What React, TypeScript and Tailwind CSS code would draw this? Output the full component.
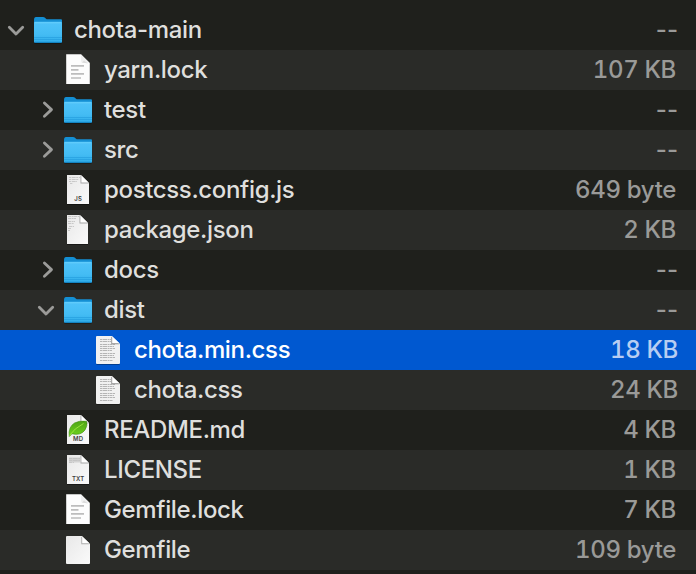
import type { ReactNode } from "react";

type IconKind = "folder" | "lines" | "js" | "json" | "css" | "md" | "txt" | "blank";

type Entry = {
  name: string;
  size: string;
  level: 0 | 1 | 2;
  icon: IconKind;
  open?: boolean;
  selected?: boolean;
};

const entries: Entry[] = [
  { name: "chota-main", size: "--", level: 0, icon: "folder", open: true },
  { name: "yarn.lock", size: "107 KB", level: 1, icon: "lines" },
  { name: "test", size: "--", level: 1, icon: "folder", open: false },
  { name: "src", size: "--", level: 1, icon: "folder", open: false },
  { name: "postcss.config.js", size: "649 byte", level: 1, icon: "js" },
  { name: "package.json", size: "2 KB", level: 1, icon: "json" },
  { name: "docs", size: "--", level: 1, icon: "folder", open: false },
  { name: "dist", size: "--", level: 1, icon: "folder", open: true },
  { name: "chota.min.css", size: "18 KB", level: 2, icon: "css", selected: true },
  { name: "chota.css", size: "24 KB", level: 2, icon: "css" },
  { name: "README.md", size: "4 KB", level: 1, icon: "md" },
  { name: "LICENSE", size: "1 KB", level: 1, icon: "txt" },
  { name: "Gemfile.lock", size: "7 KB", level: 1, icon: "lines" },
  { name: "Gemfile", size: "109 byte", level: 1, icon: "blank" },
];

const indent = { 0: "pl-0", 1: "pl-[30px]", 2: "pl-[60px]" };

function Chevron({ open }: { open?: boolean }) {
  return (
    <svg width="32" height="40" viewBox="0 0 32 40" fill="none" className="shrink-0">
      {open !== undefined && (
        <path
          d={open ? "M9.3 17.3 16 24.1 22.7 17.3" : "M14.4 13 21.5 19.6 14.4 26.2"}
          stroke="#9b9b99"
          strokeWidth="2.8"
          strokeLinecap="round"
          strokeLinejoin="round"
        />
      )}
    </svg>
  );
}

function Folder() {
  return (
    <>
      <path d="M2 10q0-3 2-3h7q1.2 0 2 .8l1 .9q.6.6 1.6.6H29q1 0 1 1V32H2z" fill="#148fd3" />
      <path d="M2.5 33.3h27" stroke="#000" strokeOpacity=".35" />
      <path d="M2 12.6q0-.8.8-.8h26.4q.8 0 .8.8V31.5q0 1.3-1.3 1.3H3.3Q2 32.8 2 31.5z" fill="url(#folder)" />
      <path d="M3 12.8h26" stroke="#6fd3fd" strokeWidth=".8" />
      <path d="M2 27.5h28M2 29.5h28" stroke="#219bdc" strokeWidth=".6" />
      <path d="M2.5 32.3h27" stroke="#0f84c6" />
    </>
  );
}

// The sheet most file types share, with its corner folded over
function Sheet({ right = 27 }: { right?: number }) {
  return (
    <>
      <path d={`M5 34.5H${right}`} stroke="#000" strokeOpacity=".4" />
      <path d={`M5 5H${right - 8}L${right} 13V34H5z`} fill="url(#paper)" />
      <path d={`M${right - 8.5} 5V13.5H${right}z`} fill="#a5a5a5" />
      <path d={`M${right - 7.6} 5.4V12.5H${right - 0.5}z`} fill="#fff" />
    </>
  );
}

function Tag({ children }: { children: string }) {
  return (
    <text
      x="16.2"
      y="31.2"
      textAnchor="middle"
      fontSize="6"
      fontWeight="600"
      letterSpacing=".15"
      fill="#3d3d3d"
      fontFamily="Inter, sans-serif"
    >
      {children}
    </text>
  );
}

const icons: Record<IconKind, ReactNode> = {
  folder: <Folder />,
  lines: (
    <>
      <path d="M4.2 4.2H19L27.8 13V34H4.2z" fill="#fdfdfd" />
      <path d="M19 4.5v6q0 2.5 2.5 2.5h6z" fill="#f0f0f0" />
      <path d="M20 12.5 22 10.5 26 13.4z" fill="#dcdcdc" />
      <path d="M9 15.8h13M9 19.8h7.5M9 23.9h13M9 28h10" stroke="#bdbdbd" strokeWidth="1.7" />
    </>
  ),
  js: (
    <>
      <Sheet />
      <path d="M7 7.5h11M7 9.5h10M7 11.5h8M8 13.5h3" stroke="#c9c9c9" strokeDasharray="2 .7 4 .5" />
      <Tag>JS</Tag>
    </>
  ),
  json: (
    <>
      <Sheet right={26} />
      <path
        d="M6 6.5h11M6 8.5h8M6 11.5h7M6 13.5h6M7 16.5h5M6 18.5h3M6 20.5h2"
        stroke="#c8c8c8"
        strokeDasharray="3 .6 2 .4"
      />
    </>
  ),
  css: (
    <>
      <path d="M4.5 34.4h23" stroke="#000" strokeOpacity=".35" />
      <path d="M5 6H20L28 14V33q0 1-1 1H5q-1 0-1-1V7q0-1 1-1z" fill="#f1f1f1" />
      <path
        d="M8 9.5h11M8 11.5h11M8 14.5h15M8 16.5h14M8 18.5h15M8 20.5h12M8 23.5h15M8 25.5h14M8 27.5h15M8 30.5h13"
        stroke="#b5b5b5"
        strokeDasharray="2.5 .5 4 .6 1.5 .4"
      />
      <path d="M19.3 6.5V14.2H27.5z" fill="#8d8d8d" />
      <path d="M20.2 6.5V13.3H27.5z" fill="#fff" />
    </>
  ),
  md: (
    <>
      <Sheet />
      <path
        d="M7.3 26.5Q6 17 12.5 13Q17 10.5 24.5 11.2Q26 15 23 20Q18.5 26 10 23.7Z"
        fill="url(#leaf)"
        stroke="#3b8c0b"
        strokeWidth=".6"
      />
      <path d="M7.5 25.5Q12 18.5 21.5 13.5" stroke="#a8ec48" strokeWidth=".8" fill="none" />
      <Tag>MD</Tag>
    </>
  ),
  txt: (
    <>
      <Sheet />
      <path d="M7 7.5h11v5H7z" fill="#d3d3d3" />
      <path d="M7 8.5h11M7 10.5h11M7 12.5h5" stroke="#bdbdbd" strokeDasharray="3 .7 5 .5" strokeWidth=".7" />
      <Tag>TXT</Tag>
    </>
  ),
  blank: (
    <>
      <path d="M5 6H20L28 14V33q0 1-1 1H5q-1 0-1-1V7q0-1 1-1z" fill="url(#paper)" />
      <path d="M19.3 6.5V14.2H27.5z" fill="#aaa" />
      <path d="M20.2 6.5V13.3H27.5z" fill="#fff" />
    </>
  ),
};

function Defs() {
  return (
    <svg width="0" height="0" className="absolute">
      <defs>
        <linearGradient id="folder" x1="0" y1="0" x2="0" y2="1">
          <stop offset="0" stopColor="#4fc3fa" />
          <stop offset=".6" stopColor="#44bcf4" />
          <stop offset="1" stopColor="#2fade9" />
        </linearGradient>
        <linearGradient id="paper" x1="0" y1="0" x2="1" y2="1">
          <stop offset="0" stopColor="#e8e8e8" />
          <stop offset="1" stopColor="#fafafa" />
        </linearGradient>
        <linearGradient id="leaf" x1="0" y1="0" x2="0" y2="1">
          <stop offset="0" stopColor="#4fa516" />
          <stop offset="1" stopColor="#70d51f" />
        </linearGradient>
      </defs>
    </svg>
  );
}

function Row({ entry }: { entry: Entry }) {
  const { name, size, level, icon, open, selected } = entry;
  const rightPad = level === 2 || size === "--" ? "pr-[18px]" : "pr-5";

  return (
    <div
      className={`flex h-10 shrink-0 leading-[39px] ${indent[level]} ${rightPad} ${
        selected ? "bg-[#0058d0] text-white" : "text-[#dfdfdd] odd:bg-[#1f201c] even:bg-[#2a2b28]"
      }`}
    >
      <Chevron open={open} />
      <svg width="32" height="40" viewBox="0 0 32 40" className="shrink-0">
        {icons[icon]}
      </svg>
      <span className="ml-2.5 tracking-[-0.35px]">{name}</span>
      <span
        className={`ml-auto ${size === "--" ? "tracking-normal" : "tabular-nums tracking-[-0.35px]"} ${
          selected ? "text-[#b7cdf2]" : "text-[#9a9a98]"
        }`}
      >
        {size}
      </span>
    </div>
  );
}

export default function App() {
  return (
    <div className="h-[574px] w-[696px] overflow-hidden bg-[#1f201c] pt-2.5 font-['Inter',sans-serif] text-2xl font-medium">
      <Defs />
      <div className="flex flex-col">
        {entries.map((entry) => (
          <Row key={entry.name} entry={entry} />
        ))}
      </div>
    </div>
  );
}
